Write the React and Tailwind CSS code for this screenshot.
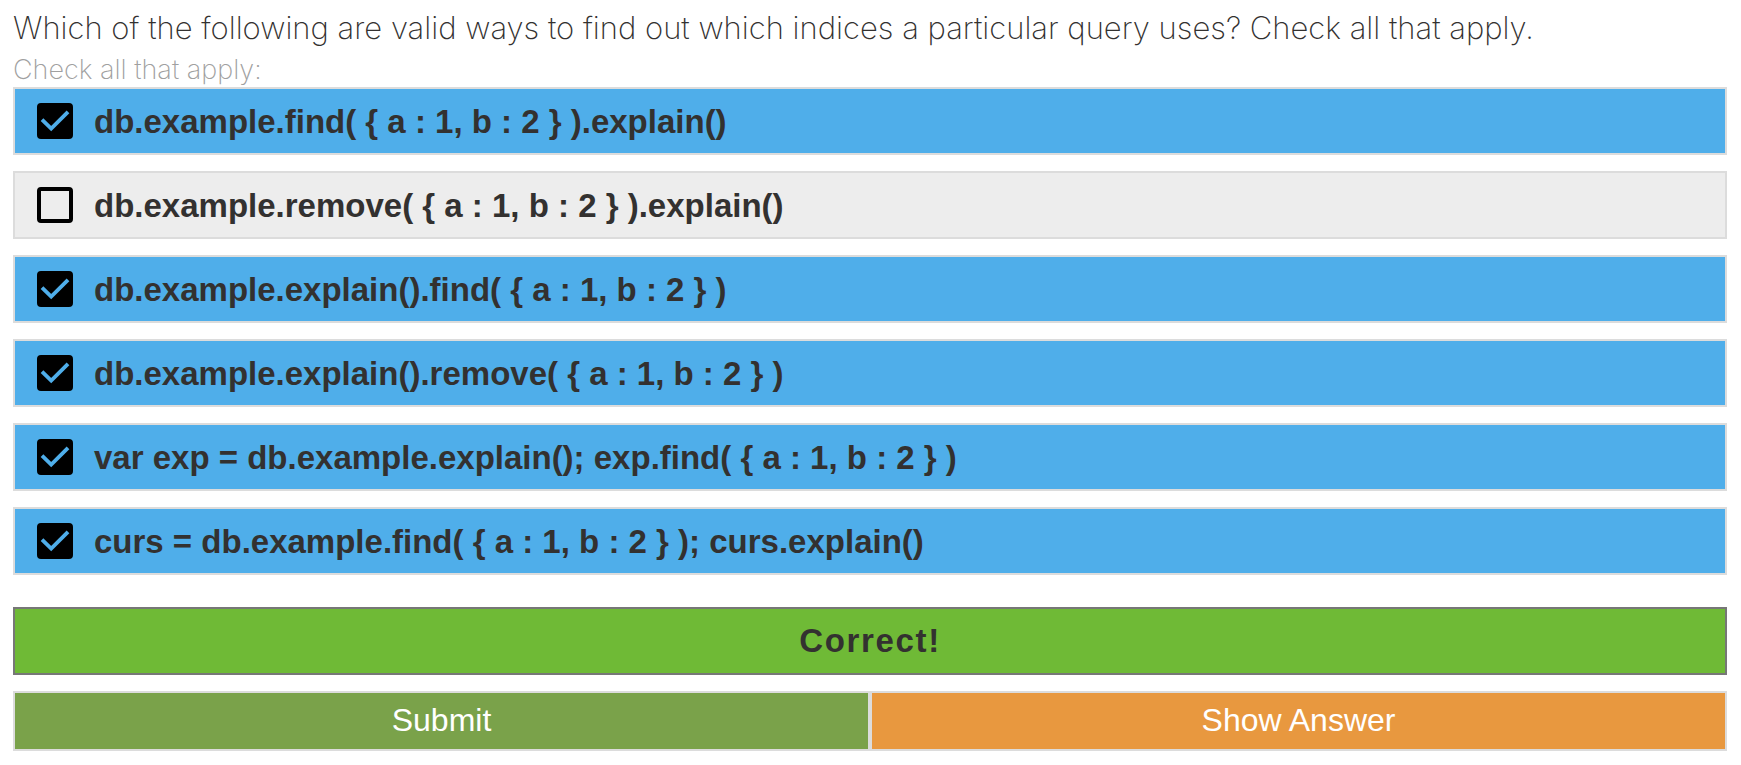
import React, { useState } from "react";

const CHOICES = [
  { code: "db.example.find( { a : 1, b : 2 } ).explain()", checked: true },
  { code: "db.example.remove( { a : 1, b : 2 } ).explain()", checked: false },
  { code: "db.example.explain().find( { a : 1, b : 2 } )", checked: true },
  { code: "db.example.explain().remove( { a : 1, b : 2 } )", checked: true },
  { code: "var exp = db.example.explain(); exp.find( { a : 1, b : 2 } )", checked: true },
  { code: "curs = db.example.find( { a : 1, b : 2 } ); curs.explain()", checked: true },
];

function Choice({ code, initial }) {
  const [checked, setChecked] = useState(initial);
  return (
    <label className="flex cursor-pointer items-center gap-[21px] border-2 border-[#dcdcdc] bg-[#ededed] px-[22px] py-[14px] has-checked:bg-[#4faeea]">
      <span className="grid size-9 shrink-0">
        <input
          type="checkbox"
          checked={checked}
          onChange={() => setChecked(!checked)}
          className="col-start-1 row-start-1 size-9 cursor-pointer appearance-none rounded-sm border-4 border-black checked:bg-black"
        />
        {checked && (
          <svg viewBox="0 0 36 36" className="pointer-events-none col-start-1 row-start-1 size-9" fill="none" stroke="#4faeea" strokeWidth="3.8" aria-hidden="true">
            <path d="M5 16.6 L14.2 25.6 L31 8.8" />
          </svg>
        )}
      </span>
      <span className="pt-[2px] text-[33px] leading-[34px] font-bold">{code}</span>
    </label>
  );
}

export default function App() {
  return (
    <main className="bg-white pt-2 pr-[14px] pb-[14px] pl-[13px] font-['Liberation_Sans',Arial,sans-serif] text-[#333130]">
      <h1 className="font-['Inter','Liberation_Sans',sans-serif] text-[31px] leading-10 font-extralight">
        Which of the following are valid ways to find out which indices a particular query uses? Check all that apply.
      </h1>
      <form onSubmit={(e) => e.preventDefault()}>
        <fieldset className="flex flex-col gap-4">
          <legend className="pt-[6px] pb-px font-['Inter','Liberation_Sans',sans-serif] text-[27px] leading-8 font-extralight text-[#a0a0a0]">
            Check all that apply:
          </legend>
          {CHOICES.map((c) => (
            <Choice key={c.code} code={c.code} initial={c.checked} />
          ))}
        </fieldset>
        <p role="status" className="mt-8 border-2 border-[#777777] bg-[#6fba36] py-[14px] text-center text-[33px] leading-9 font-bold tracking-wider">
          Correct!
        </p>
        <div className="mt-4 grid grid-cols-2">
          <button type="submit" className="cursor-pointer border-2 border-[#dcdcdc] bg-[#7aa24a] pt-[9px] pb-[11px] text-[32px] leading-9 text-white">
            Submit
          </button>
          <button type="button" className="cursor-pointer border-2 border-[#dcdcdc] bg-[#e8983f] pt-[9px] pb-[11px] text-[32px] leading-9 text-white">
            Show Answer
          </button>
        </div>
      </form>
    </main>
  );
}
